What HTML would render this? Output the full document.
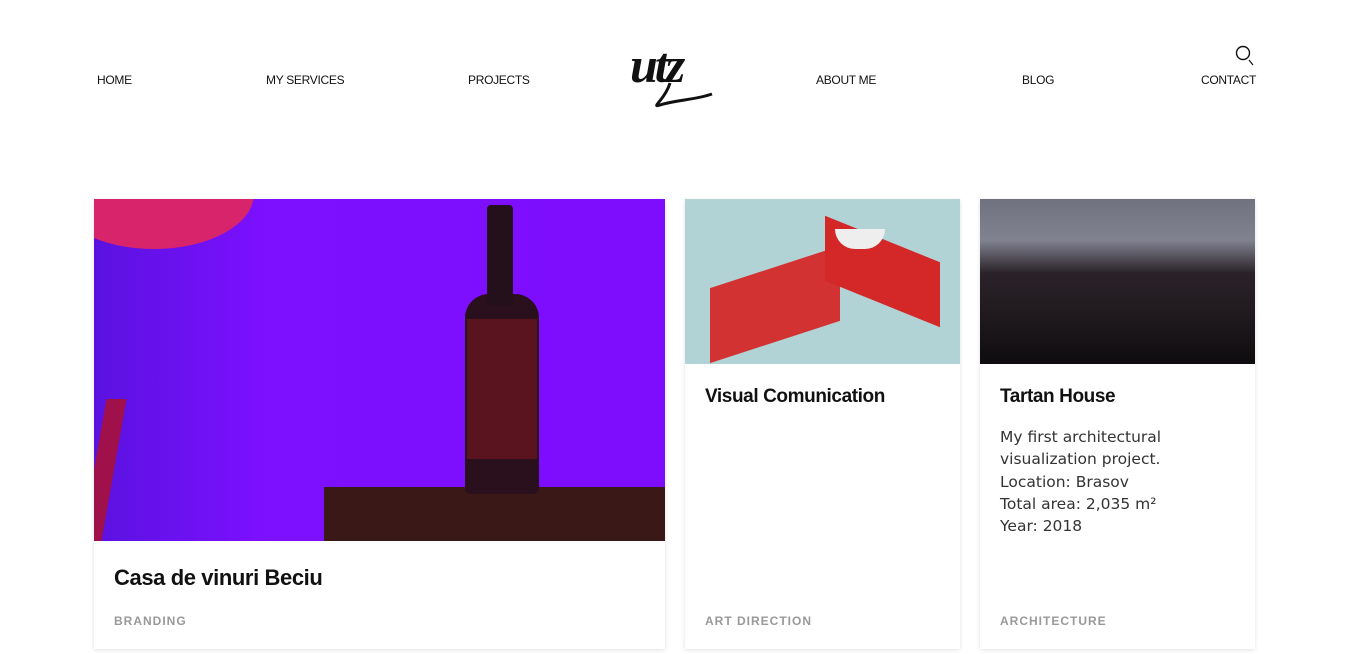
<!DOCTYPE html>
<html><head><style>
*{margin:0;padding:0;box-sizing:border-box}
body{width:1349px;height:654px;background:#fff;font-family:"Liberation Sans",sans-serif;position:relative;overflow:hidden}
.nav{position:absolute;top:73px;font-size:12px;color:#111;letter-spacing:-0.3px}
.card{position:absolute;top:199px;background:#fff;box-shadow:0 1px 4px rgba(0,0,0,.12);height:450px}
.card h2{position:absolute;left:20px;font-size:19px;font-weight:bold;color:#111;letter-spacing:-0.4px}
.tag{position:absolute;left:20px;top:415px;font-size:12px;font-weight:bold;color:#999;letter-spacing:1px}
</style></head><body>
<div class="nav" style="left:97px">HOME</div>
<div class="nav" style="left:266px">MY SERVICES</div>
<div class="nav" style="left:468px">PROJECTS</div>
<div class="nav" style="left:816px">ABOUT ME</div>
<div class="nav" style="left:1022px">BLOG</div>
<div class="nav" style="left:1201px">CONTACT</div>
<svg style="position:absolute;left:1233px;top:44px" width="26" height="26"><circle cx="10" cy="9" r="6.5" fill="none" stroke="#111" stroke-width="1.4"/><line x1="16" y1="16" x2="20" y2="21" stroke="#111" stroke-width="1.2"/></svg>
<div style="position:absolute;left:630px;top:36px;font-family:'Liberation Serif',serif;font-style:italic;font-weight:bold;font-size:50px;color:#111;letter-spacing:-3px">utz</div>
<svg style="position:absolute;left:640px;top:80px" width="75" height="30"><path d="M30 3 C25 20 10 28 20 25 C35 20 55 20 72 14" fill="none" stroke="#111" stroke-width="3"/></svg>

<div class="card" style="left:94px;width:571px">
<div style="height:342px;background:linear-gradient(90deg,#5a12e0,#7c10ff 30%,#7e0cfd);position:relative;overflow:hidden">
<div style="position:absolute;left:-40px;top:-60px;width:200px;height:110px;border-radius:50%;background:#d8246a"></div>
<div style="position:absolute;left:230px;top:288px;width:341px;height:54px;background:#3a1818"></div>
<div style="position:absolute;left:371px;top:95px;width:74px;height:200px;background:#2a0f1c;border-radius:24px 24px 6px 6px"></div>
<div style="position:absolute;left:373px;top:120px;width:70px;height:140px;background:#5a1420"></div>
<div style="position:absolute;left:393px;top:6px;width:26px;height:100px;background:#24101a;border-radius:4px"></div>
<div style="position:absolute;left:0;top:200px;width:20px;height:142px;background:#a0104a;transform:skewX(-10deg)"></div>
</div>
<h2 style="top:366px;font-size:22px">Casa de vinuri Beciu</h2>
<div class="tag">BRANDING</div>
</div>

<div class="card" style="left:685px;width:275px">
<div style="height:165px;background:#b1d3d6;position:relative;overflow:hidden">
<div style="position:absolute;left:25px;top:68px;width:130px;height:75px;background:#d23232;transform:skewY(-18deg)"></div>
<div style="position:absolute;left:140px;top:40px;width:115px;height:65px;background:#d42828;transform:skewY(22deg)"></div>
<div style="position:absolute;left:150px;top:30px;width:50px;height:20px;background:#eee;border-radius:0 0 25px 25px"></div>
</div>
<h2 style="top:187px">Visual Comunication</h2>
<div class="tag">ART DIRECTION</div>
</div>

<div class="card" style="left:980px;width:275px">
<div style="height:165px;background:linear-gradient(#707280 0%,#808290 25%,#2a2228 45%,#201a1e 70%,#0e0c0e);position:relative"></div>
<h2 style="top:187px">Tartan House</h2>
<div style="position:absolute;left:20px;top:227px;font-family:'DejaVu Sans',sans-serif;font-size:15.5px;line-height:22.3px;color:#333">My first architectural<br>visualization project.<br>Location: Brasov<br>Total area: 2,035 m²<br>Year: 2018</div>
<div class="tag">ARCHITECTURE</div>
</div>
</body></html>
